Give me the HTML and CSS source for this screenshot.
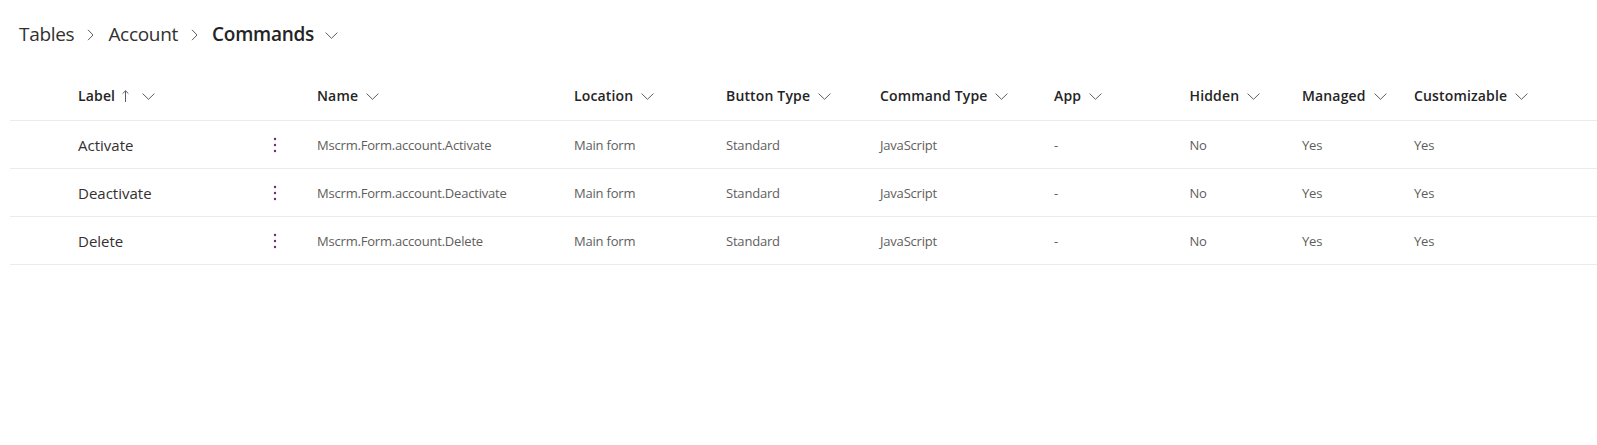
FILE: index.html
```html
<!DOCTYPE html>
<html lang="en">
<head>
<meta charset="utf-8">
<title>Commands</title>
<link rel="stylesheet" href="styles.css">
</head>
<body>
<nav class="crumbs">
  <span class="crumb">Tables</span>
  <svg class="sep" width="7" height="12" viewBox="0 0 7 12"><path d="M1 0.8 L6 6 L1 11.2" fill="none" stroke="#605e5c" stroke-width="1"/></svg>
  <span class="crumb">Account</span>
  <svg class="sep" width="7" height="12" viewBox="0 0 7 12"><path d="M1 0.8 L6 6 L1 11.2" fill="none" stroke="#605e5c" stroke-width="1"/></svg>
  <span class="crumb current">Commands</span>
  <svg class="crumb-drop" width="13" height="7" viewBox="0 0 13 7"><path d="M0.6 0.6 L6.5 6.3 L12.4 0.6" fill="none" stroke="#605e5c" stroke-width="1"/></svg>
</nav>

<div class="table">
  <div class="row head">
    <div class="cell"></div>
    <div class="cell th">Label
      <svg class="sort" width="7" height="12" viewBox="0 0 7 12"><path d="M3.5 0.8 V12 M0.6 3.6 L3.5 0.8 L6.4 3.6" fill="none" stroke="#605e5c" stroke-width="1"/></svg>
      <svg class="chev" width="13" height="7" viewBox="0 0 13 7"><path d="M0.6 0.6 L6.5 6.3 L12.4 0.6" fill="none" stroke="#605e5c" stroke-width="1"/></svg>
    </div>
    <div class="cell th">Name <svg class="chev" width="13" height="7" viewBox="0 0 13 7"><path d="M0.6 0.6 L6.5 6.3 L12.4 0.6" fill="none" stroke="#605e5c" stroke-width="1"/></svg></div>
    <div class="cell th">Location <svg class="chev" width="13" height="7" viewBox="0 0 13 7"><path d="M0.6 0.6 L6.5 6.3 L12.4 0.6" fill="none" stroke="#605e5c" stroke-width="1"/></svg></div>
    <div class="cell th">Button Type <svg class="chev" width="13" height="7" viewBox="0 0 13 7"><path d="M0.6 0.6 L6.5 6.3 L12.4 0.6" fill="none" stroke="#605e5c" stroke-width="1"/></svg></div>
    <div class="cell th">Command Type <svg class="chev" width="13" height="7" viewBox="0 0 13 7"><path d="M0.6 0.6 L6.5 6.3 L12.4 0.6" fill="none" stroke="#605e5c" stroke-width="1"/></svg></div>
    <div class="cell th">App <svg class="chev" width="13" height="7" viewBox="0 0 13 7"><path d="M0.6 0.6 L6.5 6.3 L12.4 0.6" fill="none" stroke="#605e5c" stroke-width="1"/></svg></div>
    <div class="cell th">Hidden <svg class="chev" width="13" height="7" viewBox="0 0 13 7"><path d="M0.6 0.6 L6.5 6.3 L12.4 0.6" fill="none" stroke="#605e5c" stroke-width="1"/></svg></div>
    <div class="cell th">Managed <svg class="chev" width="13" height="7" viewBox="0 0 13 7"><path d="M0.6 0.6 L6.5 6.3 L12.4 0.6" fill="none" stroke="#605e5c" stroke-width="1"/></svg></div>
    <div class="cell th">Customizable <svg class="chev" width="13" height="7" viewBox="0 0 13 7"><path d="M0.6 0.6 L6.5 6.3 L12.4 0.6" fill="none" stroke="#605e5c" stroke-width="1"/></svg></div>
  </div>

  <div class="row">
    <div class="cell"></div>
    <div class="cell label"><span>Activate</span><svg class="more" width="4" height="16" viewBox="0 0 4 16"><circle cx="2" cy="2" r="1.2"/><circle cx="2" cy="8" r="1.2"/><circle cx="2" cy="14" r="1.2"/></svg></div>
    <div class="cell td">Mscrm.Form.account.Activate</div>
    <div class="cell td">Main form</div>
    <div class="cell td">Standard</div>
    <div class="cell td">JavaScript</div>
    <div class="cell td">-</div>
    <div class="cell td">No</div>
    <div class="cell td">Yes</div>
    <div class="cell td">Yes</div>
  </div>

  <div class="row">
    <div class="cell"></div>
    <div class="cell label"><span>Deactivate</span><svg class="more" width="4" height="16" viewBox="0 0 4 16"><circle cx="2" cy="2" r="1.2"/><circle cx="2" cy="8" r="1.2"/><circle cx="2" cy="14" r="1.2"/></svg></div>
    <div class="cell td">Mscrm.Form.account.Deactivate</div>
    <div class="cell td">Main form</div>
    <div class="cell td">Standard</div>
    <div class="cell td">JavaScript</div>
    <div class="cell td">-</div>
    <div class="cell td">No</div>
    <div class="cell td">Yes</div>
    <div class="cell td">Yes</div>
  </div>

  <div class="row">
    <div class="cell"></div>
    <div class="cell label"><span>Delete</span><svg class="more" width="4" height="16" viewBox="0 0 4 16"><circle cx="2" cy="2" r="1.2"/><circle cx="2" cy="8" r="1.2"/><circle cx="2" cy="14" r="1.2"/></svg></div>
    <div class="cell td">Mscrm.Form.account.Delete</div>
    <div class="cell td">Main form</div>
    <div class="cell td">Standard</div>
    <div class="cell td">JavaScript</div>
    <div class="cell td">-</div>
    <div class="cell td">No</div>
    <div class="cell td">Yes</div>
    <div class="cell td">Yes</div>
  </div>
</div>
</body>
</html>
```

FILE: styles.css
```css
html, body {
  margin: 0;
  padding: 0;
  background: #ffffff;
}

body {
  font-family: "Open Sans", "Noto Sans", "Liberation Sans", sans-serif;
  color: #323130;
  overflow: hidden;
}

.crumbs {
  display: flex;
  align-items: center;
  height: 28px;
  padding: 20px 0 25px 19px;
  font-size: 19px;
  line-height: 28px;
}

.crumb {
  color: #323130;
  letter-spacing: -0.3px;
}

.crumb.current {
  font-weight: 600;
  color: #242424;
  letter-spacing: -0.25px;
}

.sep {
  margin: 1px 14px 0 13px;
}

.crumb-drop {
  margin: 2px 0 0 11px;
}

.table {
  margin-left: 10px;
}

.row {
  display: grid;
  grid-template-columns: 68px 239px 257px 152px 154px 174px 135.5px 112.5px 112px 1fr;
  height: 47px;
  border-bottom: 1px solid #edebe9;
  align-items: center;
}

.head .cell {
  padding-bottom: 2px;
}

.cell {
  display: flex;
  align-items: center;
  white-space: nowrap;
  min-width: 0;
}

.th {
  font-size: 14px;
  line-height: 20px;
  font-weight: 600;
  color: #242424;
  letter-spacing: 0.15px;
}

.th .chev {
  margin-left: 8px;
  margin-top: 1px;
}

.th .sort {
  margin-left: 7px;
  margin-top: 1px;
}

.th .sort + .chev {
  margin-left: 13px;
}

.label {
  font-size: 15px;
  line-height: 20px;
  color: #323130;
  letter-spacing: 0;
  justify-content: space-between;
  padding-right: 40px;
}

.more {
  fill: #742774;
}

.td {
  font-size: 13px;
  line-height: 20px;
  color: #605e5c;
  letter-spacing: -0.2px;
}
```
